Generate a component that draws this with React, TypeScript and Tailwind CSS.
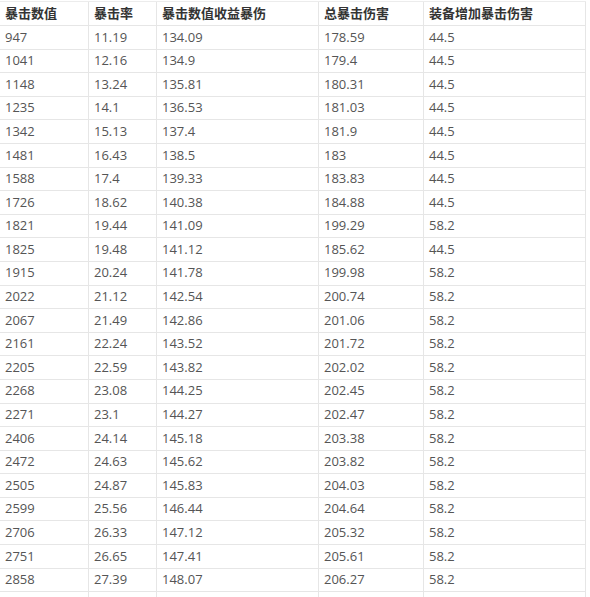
const headers = ['暴击数值', '暴击率', '暴击数值收益暴伤', '总暴击伤害', '装备增加暴击伤害']

const rows: string[][] = [
  ['947', '11.19', '134.09', '178.59', '44.5'],
  ['1041', '12.16', '134.9', '179.4', '44.5'],
  ['1148', '13.24', '135.81', '180.31', '44.5'],
  ['1235', '14.1', '136.53', '181.03', '44.5'],
  ['1342', '15.13', '137.4', '181.9', '44.5'],
  ['1481', '16.43', '138.5', '183', '44.5'],
  ['1588', '17.4', '139.33', '183.83', '44.5'],
  ['1726', '18.62', '140.38', '184.88', '44.5'],
  ['1821', '19.44', '141.09', '199.29', '58.2'],
  ['1825', '19.48', '141.12', '185.62', '44.5'],
  ['1915', '20.24', '141.78', '199.98', '58.2'],
  ['2022', '21.12', '142.54', '200.74', '58.2'],
  ['2067', '21.49', '142.86', '201.06', '58.2'],
  ['2161', '22.24', '143.52', '201.72', '58.2'],
  ['2205', '22.59', '143.82', '202.02', '58.2'],
  ['2268', '23.08', '144.25', '202.45', '58.2'],
  ['2271', '23.1', '144.27', '202.47', '58.2'],
  ['2406', '24.14', '145.18', '203.38', '58.2'],
  ['2472', '24.63', '145.62', '203.82', '58.2'],
  ['2505', '24.87', '145.83', '204.03', '58.2'],
  ['2599', '25.56', '146.44', '204.64', '58.2'],
  ['2706', '26.33', '147.12', '205.32', '58.2'],
  ['2751', '26.65', '147.41', '205.61', '58.2'],
  ['2858', '27.39', '148.07', '206.27', '58.2'],
  ['', '', '', '', ''],
]

const cols = 'grid grid-cols-[89px_68px_162px_105px_162px]'

export default function App() {
  return (
    <div className="h-[597px] w-[590px] overflow-hidden bg-white pt-px font-['Open_Sans','Noto_Sans_CJK_SC',sans-serif] text-[13px]">
      <div className="w-[586px] border-t border-[#ececec]">
        {/* header */}
        <div className={cols}>
          {headers.map((h) => (
            <div
              key={h}
              className="flex h-[24px] items-center border-r border-b border-[#e6e6e6] pl-[5px] font-bold text-[#333]"
            >
              {h}
            </div>
          ))}
        </div>

        {/* body */}
        {rows.map((r, i) => (
          <div key={i} className={cols}>
            {r.map((v, j) => (
              <div
                key={j}
                className="flex h-[23.6px] items-center border-r border-b border-[#e6e6e6] pl-[5px] text-[#555]"
              >
                {v}
              </div>
            ))}
          </div>
        ))}
      </div>
    </div>
  )
}
